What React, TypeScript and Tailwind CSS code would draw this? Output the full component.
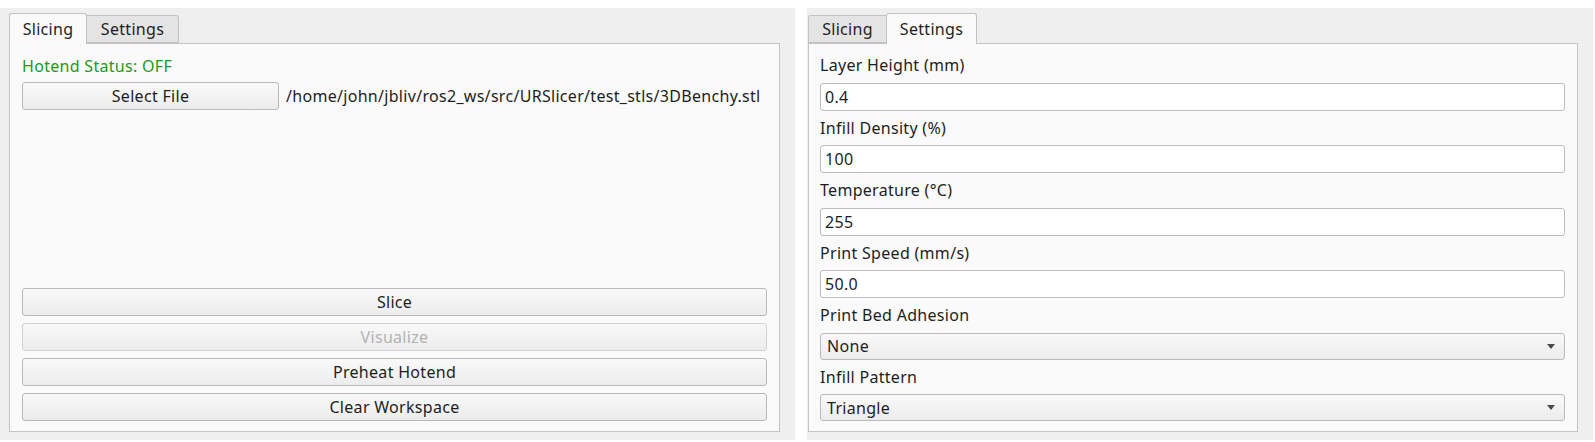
import React from 'react';

const font = { fontFamily: '"Noto Sans", "Open Sans", sans-serif' };

function Tabs({ active }: { active: 'Slicing' | 'Settings' }) {
  return (
    <div className="flex items-end h-[35px] relative z-10">
      <div
        className={
          active === 'Slicing'
            ? 'w-[78px] h-[31px] bg-[#fafafa] border border-b-0 border-[#c2c2c2] rounded-t-[3px] flex items-center justify-center text-[#1e1e1e] -mb-px'
            : 'w-[78px] h-[28px] bg-[#e4e4e4] border border-r-0 border-[#c2c2c2] rounded-tl-[3px] flex items-center justify-center text-[#1e1e1e]'
        }
      >
        Slicing
      </div>
      <div
        className={
          active === 'Settings'
            ? 'w-[91px] h-[31px] bg-[#fafafa] border border-b-0 border-[#c2c2c2] rounded-t-[3px] flex items-center justify-center text-[#1e1e1e] -mb-px'
            : 'w-[92px] h-[28px] bg-[#e4e4e4] border border-l-0 border-[#c2c2c2] rounded-tr-[3px] flex items-center justify-center text-[#1e1e1e]'
        }
      >
        Settings
      </div>
    </div>
  );
}

function Button({ label, disabled = false, className = '' }: { label: string; disabled?: boolean; className?: string }) {
  return (
    <div
      className={`h-[28px] rounded-[3px] border border-[#b9b9b9] bg-gradient-to-b from-[#f9f9f9] to-[#ececec] flex items-center justify-center ${
        disabled ? 'text-[#b3b3b3] border-[#d2d2d2]' : 'text-[#1e1e1e]'
      } ${className}`}
    >
      {label}
    </div>
  );
}

function Field({ label, value }: { label: string; value: string }) {
  return (
    <>
      <div className="h-[34.5px] flex items-center text-[#1e1e1e]">{label}</div>
      <div className="h-[28px] bg-white border border-[#bdbdbd] rounded-[3px] flex items-center pl-[4px] text-[#1e1e1e]">
        {value}
      </div>
    </>
  );
}

function Combo({ label, value }: { label: string; value: string }) {
  return (
    <>
      <div className="h-[34.5px] flex items-center text-[#1e1e1e]">{label}</div>
      <div className="h-[27px] border border-[#bababa] rounded-[3px] bg-gradient-to-b from-[#f9f9f9] to-[#ececec] flex items-center justify-between pl-[6px] pr-[9px] text-[#1e1e1e]">
        <span>{value}</span>
        <svg width="8" height="5" viewBox="0 0 8 5">
          <path d="M0 0 H8 L4 5 Z" fill="#4a4a4a" />
        </svg>
      </div>
    </>
  );
}

export default function App() {
  return (
    <div className="w-[1595px] h-[442px] bg-white flex pt-[8px] gap-[12px] text-[16px] tracking-[0.3px]" style={font}>
      <div className="w-[795px] h-[432px] bg-[#efefef] pl-[9px] flex flex-col">
        <Tabs active="Slicing" />
        <div className="w-[771px] h-[389px] bg-[#fafafa] border border-[#c4c4c4] flex flex-col pl-[12px] pr-[12px] pt-[12px] pb-[10px]">
          <div className="h-[20px] flex items-center text-[#1b9a1b]">Hotend Status: OFF</div>
          <div className="mt-[6px] flex items-center gap-[7px]">
            <Button label="Select File" className="w-[257px]" />
            <span className="text-[#1e1e1e] whitespace-nowrap">/home/john/jbliv/ros2_ws/src/URSlicer/test_stls/3DBenchy.stl</span>
          </div>
          <div className="flex-1" />
          <div className="flex flex-col gap-[7px]">
            <Button label="Slice" />
            <Button label="Visualize" disabled />
            <Button label="Preheat Hotend" />
            <Button label="Clear Workspace" />
          </div>
        </div>
      </div>
      <div className="w-[786px] h-[432px] bg-[#efefef] pl-[1px] flex flex-col">
        <Tabs active="Settings" />
        <div className="w-[770px] h-[389px] bg-[#fafafa] border border-[#c4c4c4] flex flex-col pl-[11px] pr-[12px] pt-[4px]">
          <Field label="Layer Height (mm)" value="0.4" />
          <Field label="Infill Density (%)" value="100" />
          <Field label="Temperature (°C)" value="255" />
          <Field label="Print Speed (mm/s)" value="50.0" />
          <Combo label="Print Bed Adhesion" value="None" />
          <Combo label="Infill Pattern" value="Triangle" />
        </div>
      </div>
    </div>
  );
}
